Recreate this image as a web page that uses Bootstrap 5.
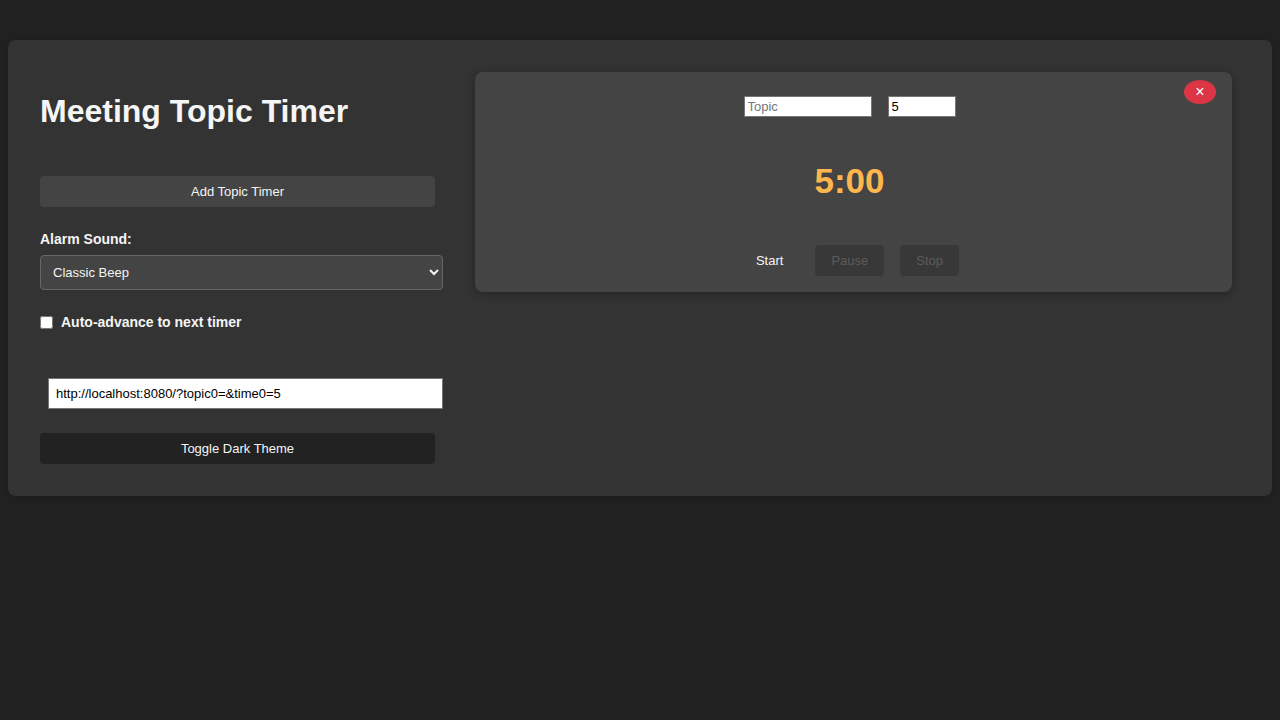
<!DOCTYPE html>
<html lang="en">
<head>
<meta charset="utf-8">
<meta name="viewport" content="width=device-width, initial-scale=1">
<title>Meeting Topic Timer</title>
<link rel="stylesheet" href="https://cdn.jsdelivr.net/npm/bootstrap@5.3.0/dist/css/bootstrap.min.css">
<style>
  body { background: #222; color: #f5f5f5; font-family: "Liberation Sans", Arial, sans-serif; font-size: 14px; line-height: 16px; }
  button, input, select { font-size: 13px; line-height: 15px; }
  .app-panel { background: #333; border-radius: 8px; margin-top: 40px; padding: 32px; box-shadow: 0 2px 16px rgba(0, 0, 0, .2); display: grid; gap: 32px; }
  @media (min-width: 768px) {
    .app-panel { grid-template-columns: minmax(0, 403fr) minmax(0, 765fr); }
  }
  .heading { font-size: 32px; line-height: 36px; font-weight: 700; margin: 21px 0 47px; }
  .action { --bs-btn-color: #f5f5f5; --bs-btn-bg: #444; --bs-btn-hover-color: #fff; --bs-btn-hover-bg: #555;
    --bs-btn-disabled-color: #f5f5f5; --bs-btn-disabled-bg: #222;
    --bs-btn-font-size: 13px; --bs-btn-line-height: 15px; --bs-btn-padding-x: 16px; --bs-btn-padding-y: 8px;
    --bs-btn-border-width: 0; --bs-btn-border-radius: 4px; }
  .action-dark { --bs-btn-bg: #222; }
  .action-muted { --bs-btn-disabled-color: #666; --bs-btn-disabled-bg: #333; --bs-btn-disabled-opacity: .7; }
  .sound { background: #444; color: #f5f5f5; border: 1px solid #666; border-radius: 4px; height: 35px; padding: 8px; }
  .plain-box { background: #fff; color: #000; border: 1px solid #767676; border-radius: 0; padding: 2px 3px; }
  .plain-box::placeholder { color: #757575; }
  .share { padding: 7px; }
  .share-row { margin-top: 48px; }
  .topic { width: 128px; }
  .minutes { width: 68px; }
  .timer { background: #444; border-radius: 8px; padding: 24px 24px 16px 16px; box-shadow: 0 2px 8px rgba(0, 0, 0, .3); }
  .clock { color: #ffb74d; font-size: 35px; line-height: 40px; font-weight: 700; margin: 44px 0; }
  .dismiss { top: 8px; right: 16px; width: 32px; height: 24px; border-radius: 50%; background: #dc3545; color: #fff; font-size: 16px; line-height: 24px; }
  .check { width: 13px; height: 13px; }
</style>
</head>
<body>
<main class="app-panel mx-2 mb-3">
  <section>
    <h1 class="heading">Meeting Topic Timer</h1>
    <div class="d-flex me-2 mb-4"><button type="button" class="btn action w-100">Add Topic Timer</button></div>
    <label for="sound" class="d-block fw-bold mb-2">Alarm Sound:</label>
    <select id="sound" class="sound d-block w-100 mb-4"><option>Classic Beep</option><option>Chime</option></select>
    <div class="d-flex align-items-center gap-2">
      <input type="checkbox" id="advance" class="check m-0">
      <label for="advance" class="fw-bold">Auto-advance to next timer</label>
    </div>
    <div class="share-row ps-2 mb-4"><input type="text" class="plain-box share d-block w-100" aria-label="Share link" value="http://localhost:8080/?topic0=&amp;time0=5"></div>
    <div class="d-flex me-2"><button type="button" class="btn action action-dark w-100">Toggle Dark Theme</button></div>
  </section>
  <section class="pe-2">
    <article class="timer position-relative d-flex flex-column align-items-center">
      <button type="button" class="dismiss position-absolute border-0 p-0" aria-label="Remove timer">×</button>
      <div class="d-flex gap-3">
        <input type="text" class="plain-box topic" placeholder="Topic" aria-label="Topic">
        <input type="number" class="plain-box minutes" value="5" aria-label="Minutes">
      </div>
      <div class="clock">5:00</div>
      <div class="d-flex gap-3">
        <button type="button" class="btn action">Start</button>
        <button type="button" class="btn action action-muted" disabled>Pause</button>
        <button type="button" class="btn action action-muted" disabled>Stop</button>
      </div>
    </article>
  </section>
</main>
<script src="https://cdn.jsdelivr.net/npm/bootstrap@5.3.0/dist/js/bootstrap.bundle.min.js"></script>
</body>
</html>
